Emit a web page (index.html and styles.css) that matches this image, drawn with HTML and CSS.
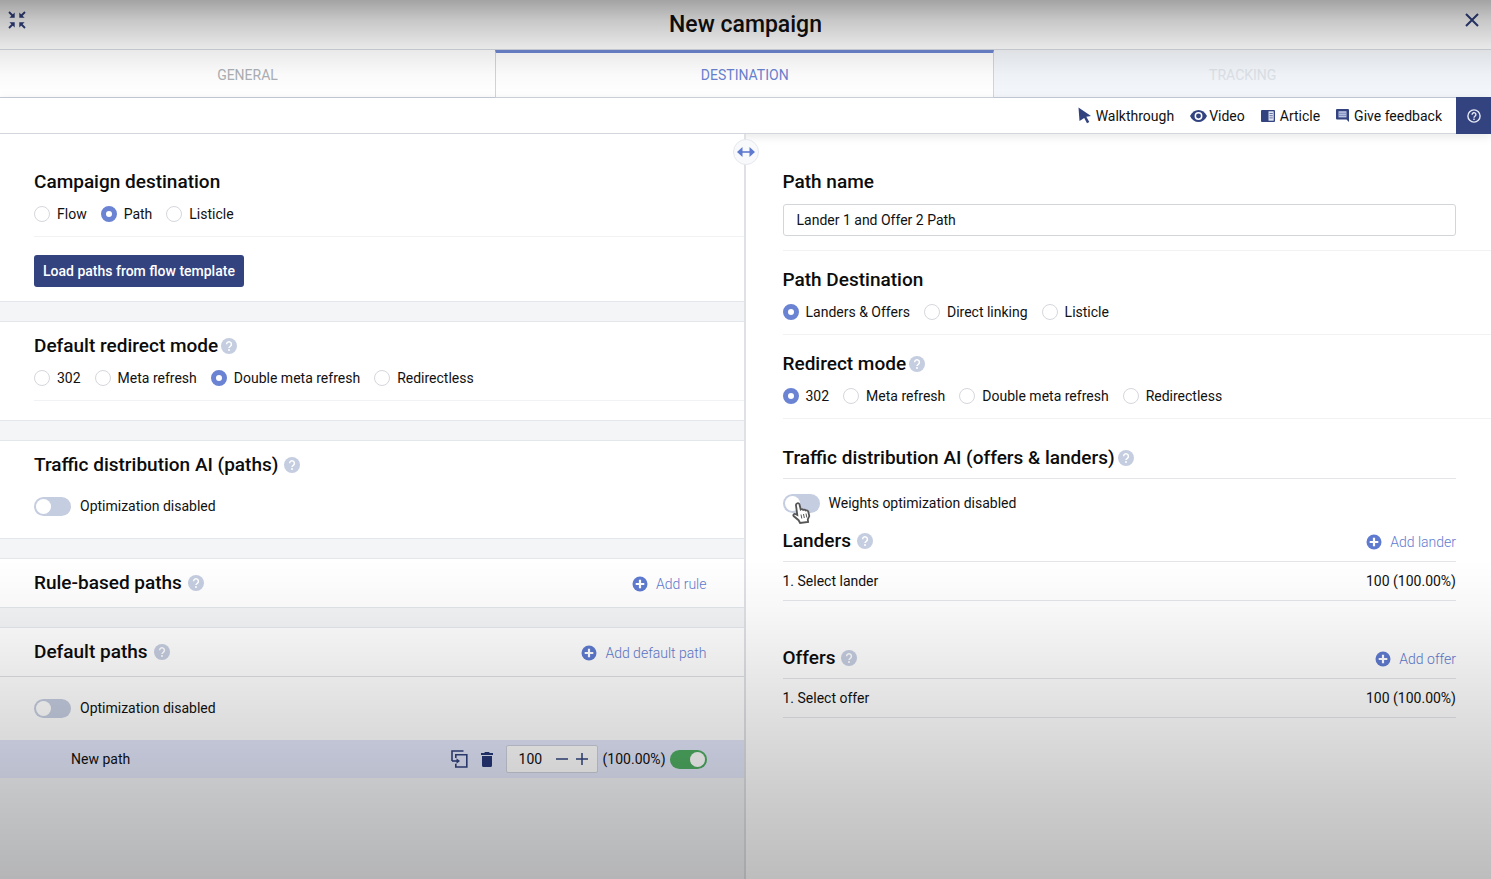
FILE: index.html
```html
<!DOCTYPE html>
<html lang="en">
<head>
  <meta charset="UTF-8" />
  <meta name="viewport" content="width=device-width, initial-scale=1.0"/>
  <title>New campaign</title>
  <link rel="stylesheet" href="styles.css">
</head>
<body>
  <svg class="sprite" aria-hidden="true">
    <symbol id="i-help" viewBox="0 0 16 16">
      <circle cx="8" cy="8" r="8" fill="#c5cde0"/>
      <path d="M5.6 6.3a2.4 2.4 0 1 1 3.7 2C8.400 8.900 8 9.200 8 10" fill="none" stroke="#fff" stroke-width="1.500"/>
      <circle cx="8" cy="12" r="1" fill="#fff"/>
    </symbol>
    <symbol id="i-plus" viewBox="0 0 16 16">
      <circle cx="8" cy="8" r="7.500" fill="#5f7bd0"/>
      <path d="M8 3.700v8.600M3.700 8h8.600" stroke="#fff" stroke-width="2.200"/>
    </symbol>
  </svg>

  <div class="modal">
    <header class="top">
      <button class="icon-btn" aria-label="Collapse">
        <svg width="18" height="18" viewBox="0 0 18 18" fill="#2f3f7c" stroke="#2f3f7c" stroke-width="1.800">
          <path d="M1 1l4 4M17 1l-4 4M1 17l4-4M17 17l-4-4"/>
          <path stroke="none" d="M6.700 1.400v5.300H1.400zM11.300 1.400v5.300h5.300zM6.700 16.600v-5.300H1.400zM11.300 16.600v-5.300h5.300z"/>
        </svg>
      </button>
      <h1>New campaign</h1>
      <button class="icon-btn" aria-label="Close">
        <svg width="14" height="14" viewBox="0 0 14 14" stroke="#2f3f7c" stroke-width="2"><path d="M1 1l12 12M13 1L1 13"/></svg>
      </button>
    </header>

    <nav class="tabs">
      <button class="tab">GENERAL</button>
      <button class="tab active">DESTINATION</button>
      <button class="tab disabled">TRACKING</button>
    </nav>

    <div class="toolbar">
      <a href="#walkthrough">
        <svg width="13" height="17" viewBox="0 0 13 17" fill="#32437f"><path d="M.5.500L13 9 8.300 9.700l3 5.200-2.300 1.300-2.800-5.200L1.500 14z"/></svg>
        Walkthrough
      </a>
      <a href="#video" class="tight">
        <svg width="17" height="14" viewBox="0 0 17 14"><path d="M0 7C2 3 5 1 8.500 1S15 3 17 7c-2 4-5 6-8.500 6S2 11 0 7z" fill="#32437f"/><circle cx="8.500" cy="7" r="3.200" fill="none" stroke="#fff" stroke-width="1.500"/></svg>
        Video
      </a>
      <a href="#article">
        <svg width="14" height="12" viewBox="0 0 14 12"><rect width="14" height="12" rx="1" fill="#32437f"/><path d="M7.500 1.300h5.200v9.400H7.500z" fill="#dfe4f3"/><path d="M8.500 3.500h3.300M8.500 5.700h3.300M8.500 7.900h3.300" stroke="#32437f" stroke-width=".7"/></svg>
        Article
      </a>
      <a href="#feedback">
        <svg width="13" height="13" viewBox="0 0 13 13"><path d="M1 0h11a1 1 0 0 1 1 1v12l-2.500-2.500H1a1 1 0 0 1-1-1V1a1 1 0 0 1 1-1z" fill="#32437f"/><path d="M2.500 2.200h8v6.200h-8z" fill="#b9c3e2"/><path d="M3 4.300h7M3 6.400h7" stroke="#6f80b8" stroke-width=".8"/></svg>
        Give feedback
      </a>
      <button class="help-btn" aria-label="Help">
        <svg width="14" height="14" viewBox="0 0 14 14" fill="none" stroke="#e6eaf6" stroke-width="1.400"><circle cx="7" cy="7" r="6.100"/><path d="M5.100 5.700a1.900 1.900 0 1 1 2.900 1.500C7.300 7.700 7 8 7 8.700"/><path d="M7 9.600v1.400"/></svg>
      </button>
    </div>

    <main class="panes">
      <div class="pane left">
        <section class="card first">
          <h2>Campaign destination</h2>
          <div class="radios line">
            <label><input type="radio" name="dest">Flow</label>
            <label><input type="radio" name="dest" checked>Path</label>
            <label><input type="radio" name="dest">Listicle</label>
          </div>
          <button class="primary">Load paths from flow template</button>
        </section>

        <section class="card redirect">
          <h2 class="near">Default redirect mode <svg class="help"><use href="#i-help"/></svg></h2>
          <div class="radios line">
            <label><input type="radio" name="dmode">302</label>
            <label><input type="radio" name="dmode">Meta refresh</label>
            <label><input type="radio" name="dmode" checked>Double meta refresh</label>
            <label><input type="radio" name="dmode">Redirectless</label>
          </div>
        </section>

        <section class="card traffic">
          <h2>Traffic distribution AI (paths) <svg class="help"><use href="#i-help"/></svg></h2>
          <label class="switch"><input type="checkbox">Optimization disabled</label>
        </section>

        <section class="card">
          <div class="row">
            <h2>Rule-based paths <svg class="help"><use href="#i-help"/></svg></h2>
            <button class="add"><svg><use href="#i-plus"/></svg>Add rule</button>
          </div>
        </section>

        <section class="card last">
          <div class="row">
            <h2>Default paths <svg class="help"><use href="#i-help"/></svg></h2>
            <button class="add"><svg><use href="#i-plus"/></svg>Add default path</button>
          </div>
          <label class="switch"><input type="checkbox">Optimization disabled</label>
          <div class="path">
            <span class="path-name">New path</span>
            <button class="icon-btn" aria-label="Copy path">
              <svg width="17" height="18" viewBox="0 0 17 18" fill="none" stroke="#32437f" stroke-width="1.600"><path d="M1 11V1h11.500M4.800 8V4.800h11v12.200h-11v-3.200"/><path d="M1 11h5"/><path d="M5.500 8.300L9 11l-3.500 2.700z" fill="#32437f" stroke="none"/></svg>
            </button>
            <button class="icon-btn" aria-label="Delete path">
              <svg width="12" height="15" viewBox="0 0 12 15" fill="#27377a"><path d="M4 0h4l.8 1H12v2H0V1h3.200zM1 4h10v9.500a1.500 1.500 0 0 1-1.500 1.500h-7A1.500 1.500 0 0 1 1 13.500z"/></svg>
            </button>
            <div class="stepper">
              <input type="text" value="100" aria-label="Weight">
              <button aria-label="Decrease"><svg width="12" height="12" viewBox="0 0 12 12" stroke="#32437f" stroke-width="1.500"><path d="M0 6h12"/></svg></button>
              <button aria-label="Increase"><svg width="12" height="12" viewBox="0 0 12 12" stroke="#32437f" stroke-width="1.500"><path d="M0 6h12M6 0v12"/></svg></button>
            </div>
            <span class="share">(100.00%)</span>
            <input type="checkbox" class="toggle" aria-label="Path enabled" checked>
          </div>
        </section>
      </div>

      <div class="divider">
        <button class="handle" aria-label="Resize panes">
          <svg width="18" height="10" viewBox="0 0 18 10" fill="#5f7bd0"><path d="M0 5l5.500-5v10zM18 5l-5.500-5v10z"/><path d="M4 4.200h10v1.600H4z"/></svg>
        </button>
      </div>

      <div class="pane right">
        <section class="field name">
          <h2><label for="pathName">Path name</label></h2>
          <input type="text" id="pathName" value="Lander 1 and Offer 2 Path">
        </section>

        <section class="field">
          <h2>Path Destination</h2>
          <div class="radios">
            <label><input type="radio" name="pdest" checked>Landers &amp; Offers</label>
            <label><input type="radio" name="pdest">Direct linking</label>
            <label><input type="radio" name="pdest">Listicle</label>
          </div>
        </section>

        <section class="field">
          <h2 class="near">Redirect mode <svg class="help"><use href="#i-help"/></svg></h2>
          <div class="radios">
            <label><input type="radio" name="pmode" checked>302</label>
            <label><input type="radio" name="pmode">Meta refresh</label>
            <label><input type="radio" name="pmode">Double meta refresh</label>
            <label><input type="radio" name="pmode">Redirectless</label>
          </div>
        </section>

        <section class="group ai">
          <div class="group-head">
            <h2 class="near">Traffic distribution AI (offers &amp; landers) <svg class="help"><use href="#i-help"/></svg></h2>
          </div>
          <label class="switch">
            <input type="checkbox">Weights optimization disabled
            <svg class="pointer" width="19" height="22" viewBox="0 0 19 22"><path d="M5 1.500c1-.7 2.200-.2 2.500 1l1.200 5c1-.6 2-.3 2.500.4 1-.5 2-.2 2.500.6 1.200-.5 2.300 0 2.600 1.200l1 4.300-1.500 3.500.3 2.500-8 1-1.500-2.800-5-4.200c-.8-1 .3-2.500 1.700-2l2 1L4 3.500c-.2-.8.300-1.600 1-2z" fill="#fff" stroke="#555" stroke-width="1.800"/><path d="M9 12.500l.8 4M11.500 12l.8 4M14 11.500l.8 4" stroke="#555"/></svg>
          </label>
        </section>

        <section class="group">
          <div class="group-head">
            <h2>Landers <svg class="help"><use href="#i-help"/></svg></h2>
            <button class="add"><svg><use href="#i-plus"/></svg>Add lander</button>
          </div>
          <div class="item"><span>1. Select lander</span><span>100 (100.00%)</span></div>
        </section>

        <section class="group offers">
          <div class="group-head">
            <h2>Offers <svg class="help"><use href="#i-help"/></svg></h2>
            <button class="add"><svg><use href="#i-plus"/></svg>Add offer</button>
          </div>
          <div class="item"><span>1. Select offer</span><span>100 (100.00%)</span></div>
        </section>
      </div>
    </main>
  </div>
</body>
</html>
```
FILE: styles.css
```css
* {
  margin: 0;
  padding: 0;
  box-sizing: border-box;
}
body {
  font-family: Roboto, sans-serif;
  font-size: 14px;
  line-height: 20px;
  color: #111;
  background: #fff;
}
/* shade over the top and the bottom of the window */
body::after {
  content: '';
  position: fixed;
  inset: 0;
  pointer-events: none;
  background:
    linear-gradient(rgba(0, 0, 0, 0.36), rgba(0, 0, 0, 0.22) 20px, rgba(0, 0, 0, 0.09) 48px, rgba(0, 0, 0, 0.02) 75px, transparent 95px),
    linear-gradient(transparent 560px, rgba(0, 0, 0, 0.03) 610px, rgba(0, 0, 0, 0.13) 720px, rgba(0, 0, 0, 0.2) 800px, rgba(0, 0, 0, 0.26));
}
button {
  font: inherit;
  color: inherit;
  background: none;
  border: 0;
  cursor: pointer;
}
input {
  font: inherit;
  color: inherit;
}
svg {
  display: block;
  flex-shrink: 0;
}
.sprite {
  display: none;
}
.modal {
  display: flex;
  flex-direction: column;
  min-height: 100vh;
}

.top {
  display: flex;
  justify-content: space-between;
  align-items: flex-start;
  height: 50px;
  padding: 11px 12px 0 8px;
  border-bottom: 1px solid #d4d8e0;
}
.top .icon-btn {
  display: flex;
  align-items: center;
  height: 18px;
}
h1 {
  font-size: 23px;
  line-height: 28px;
  font-weight: 500;
}

.tabs {
  display: grid;
  grid-template-columns: 33.2% 33.5% 1fr;
  height: 48px;
}
.tab {
  padding-top: 2px;
  color: #adb0b5;
  border-bottom: 1px solid #c6ccd8;
}
.tab.active {
  padding-top: 0;
  color: #6a83d2;
  border: 1px solid #d0d5de;
  border-top: 3px solid #6d86d2;
}
.tab.disabled {
  color: #dde3e9;
  background: #f3f6fa;
}

.toolbar {
  display: flex;
  justify-content: flex-end;
  align-items: center;
  gap: 16px;
  height: 36px;
  border-bottom: 1px solid #d3d6dc;
  box-shadow: 0 2px 10px rgba(0, 0, 0, 0.1);
}
.toolbar a {
  display: flex;
  align-items: center;
  gap: 5px;
  color: #111;
  text-decoration: none;
}
.toolbar a.tight {
  gap: 2px;
}
.help-btn {
  display: flex;
  align-items: center;
  justify-content: center;
  align-self: stretch;
  width: 35px;
  margin: -1px 0 -1px -2px;
  background: #32437f;
}

.panes {
  display: grid;
  grid-template-columns: calc(50% - 2px) 2px 1fr;
  flex: 1;
}
.left {
  background: #f4f5f7;
}
.divider {
  position: relative;
  background: #dfe1e6;
}
.handle {
  position: absolute;
  top: 5px;
  left: -11px;
  display: flex;
  align-items: center;
  justify-content: center;
  width: 26px;
  height: 26px;
  border: 1px solid #e6e8ed;
  border-radius: 50%;
  background: #f8f9fb;
}

h2 {
  display: flex;
  align-items: center;
  gap: 6px;
  font-size: 19px;
  line-height: 24px;
  font-weight: 500;
  color: #0c0c0c;
}
h2.near {
  gap: 3px;
}
.help {
  width: 16px;
  height: 16px;
}

.card {
  padding: 12px 37px 12px 34px;
  margin-bottom: 19px;
  background: #fff;
  border: solid #e3e6ea;
  border-width: 1px 0;
}
.card.first {
  padding-top: 36px;
  padding-bottom: 14px;
  border-top: 0;
}
.card.redirect {
  padding-bottom: 19px;
}
.card.traffic {
  padding-bottom: 21px;
}
.card.last {
  padding-bottom: 0;
  margin-bottom: 0;
  border-bottom: 0;
}
.card .switch {
  margin-top: 18px;
}
.card.last .switch {
  margin-top: 20px;
}
.row {
  display: flex;
  justify-content: space-between;
  align-items: center;
}
.last .row {
  margin: 0 -37px 0 -34px;
  padding: 0 37px 12px 34px;
  border-bottom: 1px solid #dfe1e4;
}

.radios {
  display: flex;
  gap: 14px;
  margin-top: 10px;
}
.radios.line {
  margin-right: -37px;
  padding-bottom: 12px;
  border-bottom: 1px solid #f1f2f3;
}
.radios label {
  display: flex;
  align-items: center;
  gap: 7px;
}
input[type="radio"] {
  appearance: none;
  width: 16px;
  height: 16px;
  border: 1px solid #d5d7dd;
  border-radius: 50%;
  background: #fff;
}
input[type="radio"]:checked {
  border: 5px solid #6a83d2;
}
.primary {
  display: block;
  height: 32px;
  margin-top: 18px;
  padding: 0 9px;
  color: #fff;
  font-weight: 500;
  background: #32437f;
  border-radius: 3px;
}

.switch {
  position: relative;
  display: flex;
  align-items: center;
  gap: 9px;
  height: 22px;
}
input[type="checkbox"] {
  appearance: none;
  flex-shrink: 0;
  width: 37px;
  height: 19px;
  padding: 2px;
  border-radius: 10px;
  background: #c5cde0;
}
input[type="checkbox"]::before {
  content: '';
  display: block;
  width: 15px;
  height: 15px;
  border-radius: 50%;
  background: #fff;
}
input[type="checkbox"]:checked {
  background: #4fae63;
}
input[type="checkbox"]:checked::before {
  margin-left: auto;
}
.pointer {
  position: absolute;
  top: 10px;
  left: 9px;
}

.add {
  display: flex;
  align-items: center;
  gap: 8px;
  padding-top: 2px;
  font-weight: 300;
  color: #5f7bd0;
}
.add svg {
  width: 16px;
  height: 16px;
}

.path {
  display: flex;
  align-items: center;
  height: 38px;
  margin: 21px -37px 0 -34px;
  padding: 0 37px 0 71px;
  background: #e4e8fb;
}
.path-name {
  flex: 1;
}
.path .icon-btn {
  margin-right: 13px;
}
.stepper {
  display: flex;
  align-items: center;
  gap: 8px;
  width: 92px;
  height: 28px;
  padding: 0 9px 0 12px;
  border: 1px solid #cfd3de;
  border-radius: 2px;
  background: #fff;
}
.stepper input {
  width: 29px;
  border: 0;
  background: none;
}
.share {
  margin: 0 4px 0 5px;
}

.right {
  padding: 0 0 40px 37px;
}
.field {
  padding: 17px 0 12px;
  border-bottom: 1px solid #f1f2f3;
}
.field.name {
  padding-top: 36px;
  padding-bottom: 14px;
}
#pathName {
  display: block;
  width: calc(100% - 35px);
  height: 32px;
  margin-top: 10px;
  padding: 0 13px;
  border: 1px solid #d3d6d9;
  border-radius: 3px;
}
.group {
  margin: 15px 35px 0 0;
}
.group.ai {
  margin-top: 27px;
}
.group.offers {
  margin-top: 45px;
}
.group-head {
  display: flex;
  justify-content: space-between;
  align-items: center;
  padding-bottom: 8px;
  border-bottom: 1px solid #e4e5e8;
}
.group .switch {
  margin-top: 13px;
}
.item {
  display: flex;
  justify-content: space-between;
  align-items: center;
  height: 39px;
  border-bottom: 1px solid #e4e5e8;
}
```
